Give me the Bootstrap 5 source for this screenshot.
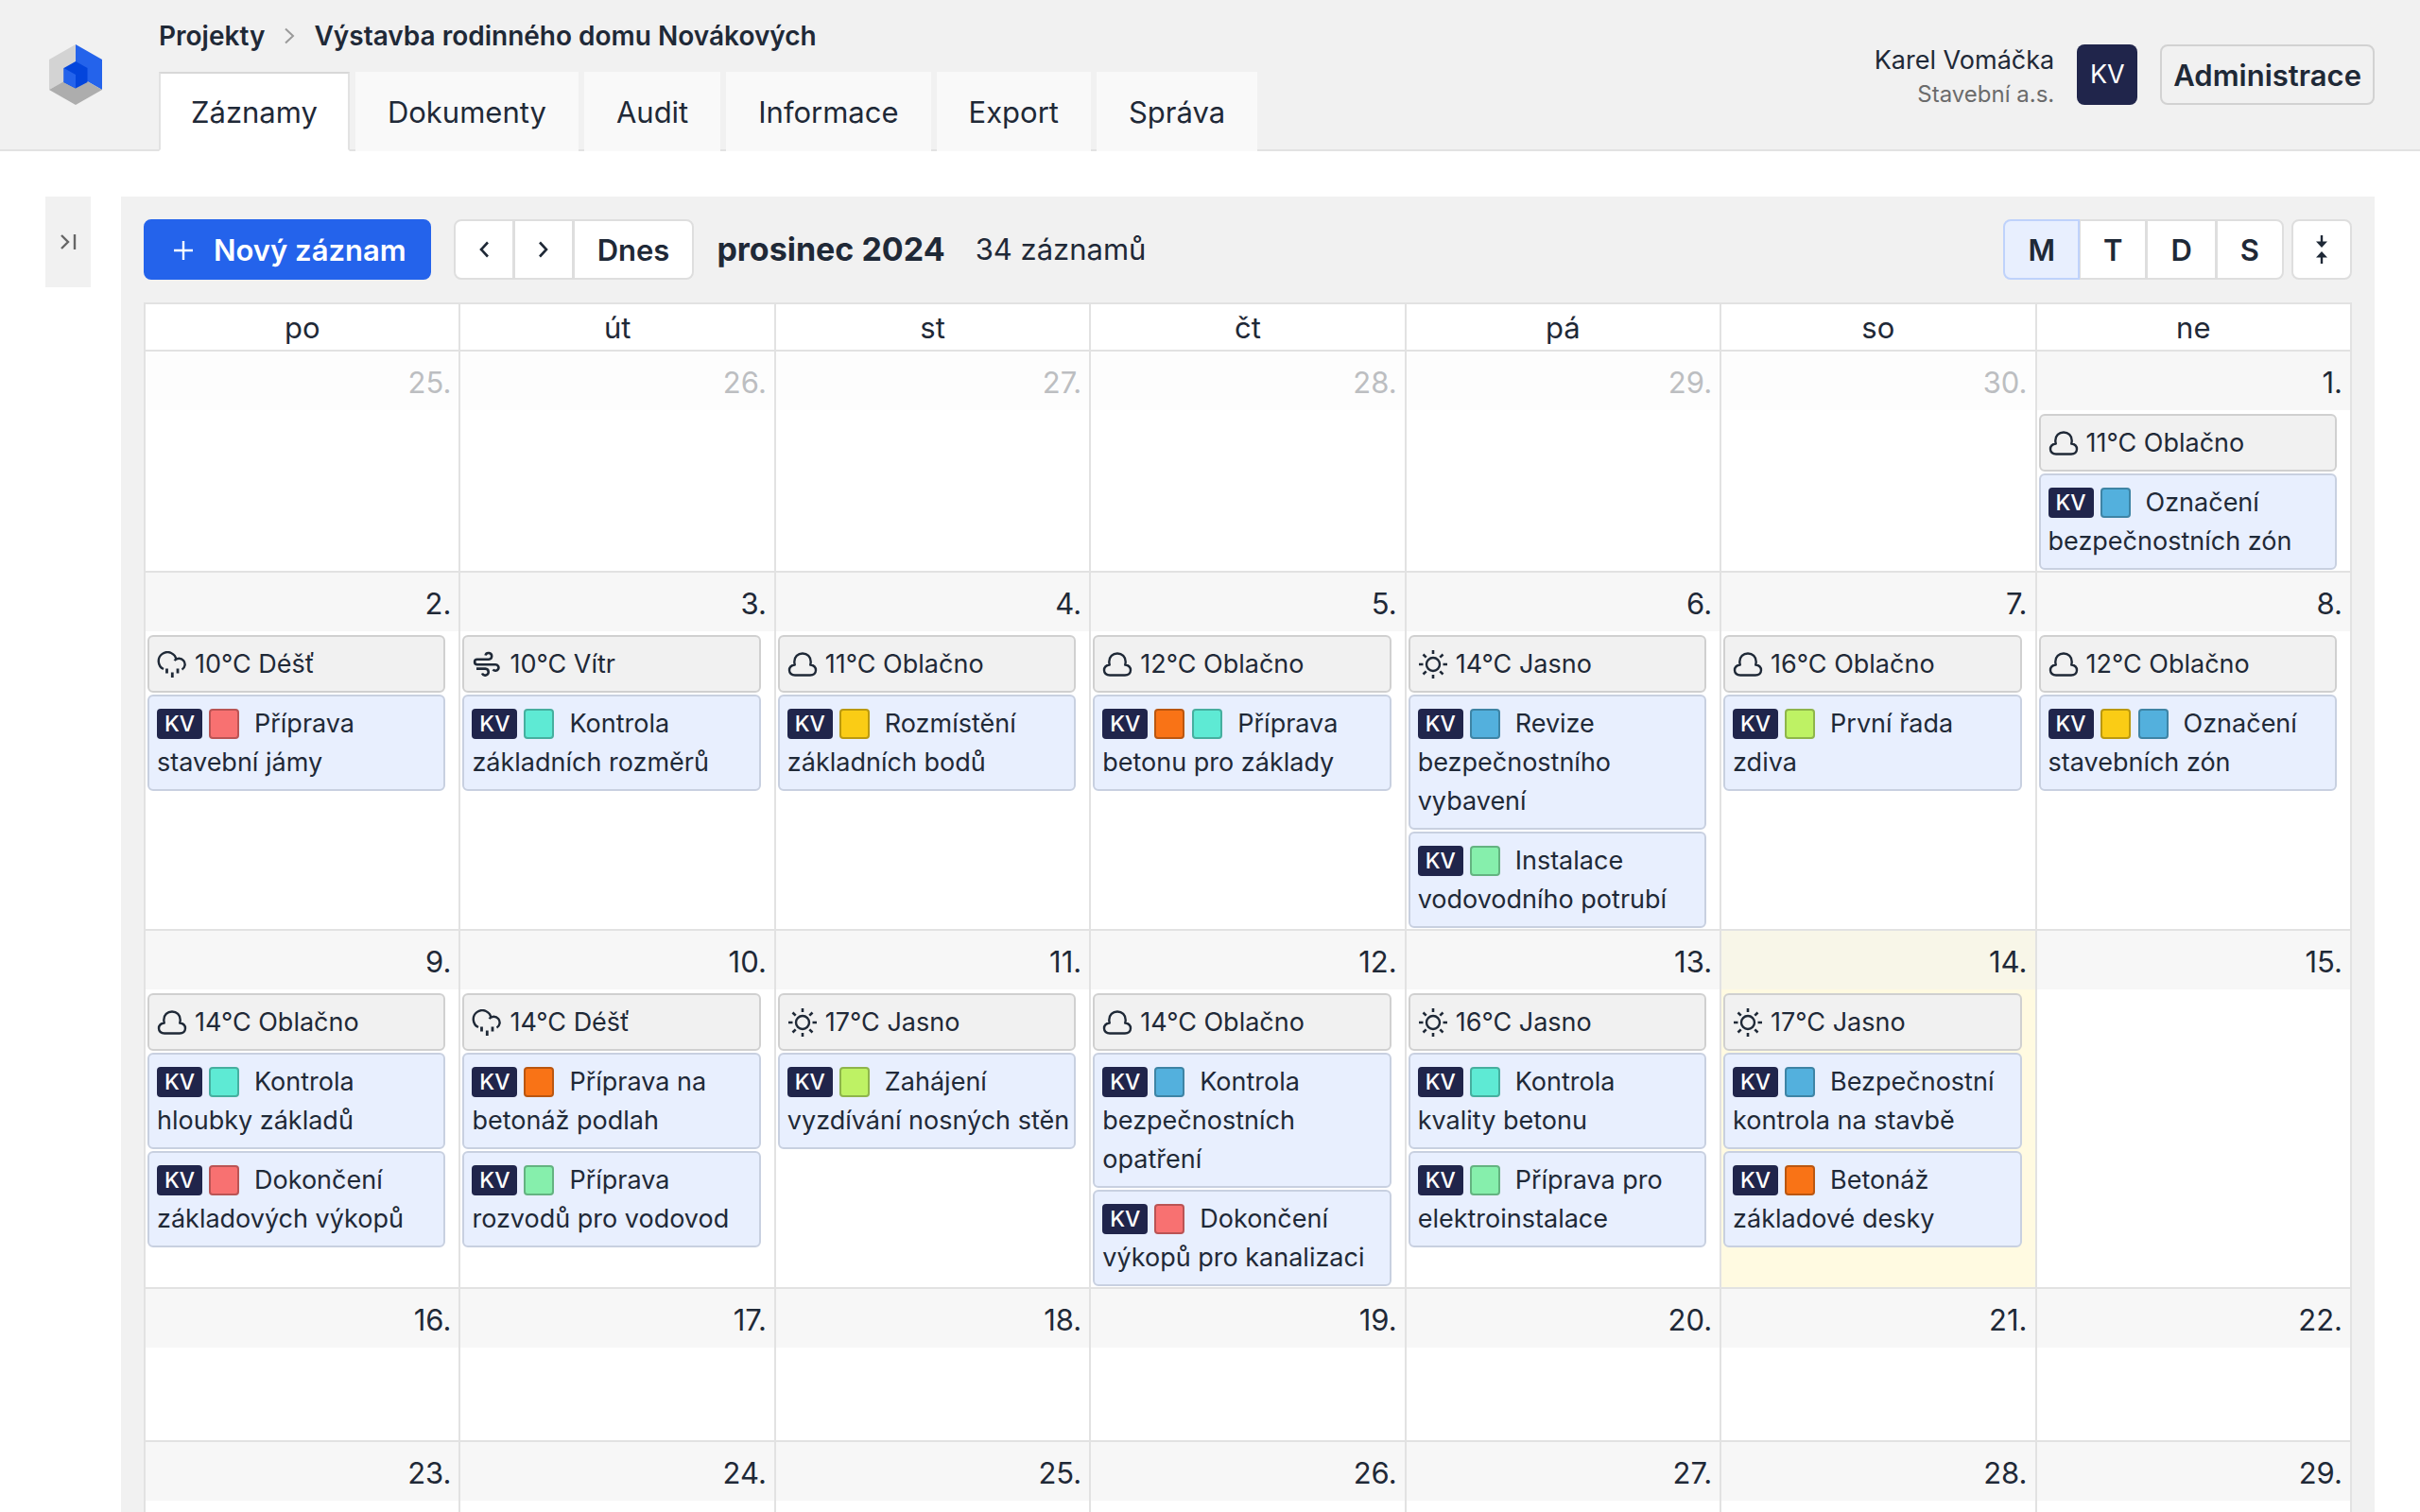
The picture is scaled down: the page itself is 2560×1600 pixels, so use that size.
<!DOCTYPE html>
<html lang="cs">
<head>
<meta charset="utf-8">
<meta name="viewport" content="width=device-width, initial-scale=1">
<title>Výstavba rodinného domu Novákových – Záznamy</title>
<link href="https://cdn.jsdelivr.net/npm/bootstrap@5.3.0/dist/css/bootstrap.min.css" rel="stylesheet">
<style>
  :root { --ink: #1f2937; --line: #e2e2e2; --panel: #f1f1f1; --navy: #20254b; --blue: #2463eb; }
  body { font-family: Inter, "Liberation Sans", sans-serif; font-size: 31px; line-height: 48px; color: var(--ink); background: #fff; overflow-x: hidden; }
  a { color: inherit; text-decoration: none; }
  svg { display: block; flex: none; }

  .topbar { background: var(--panel); padding: 0 48px; height: 160px; border-bottom: 2px solid var(--line); }
  .brandmark { margin-right: 60px; }
  .crumbs { --bs-breadcrumb-margin-bottom: 0; font-size: 28px; font-weight: 600; line-height: 40px; padding-top: 18px; gap: 20px; }
  .maintabs { gap: 6px; margin-bottom: -2px; border: 0; }
  .maintabs .nav-link { border: 2px solid transparent; border-radius: 0; padding: 17px 32px 15px; line-height: 48px; margin: 0; background: #f9f9f9; color: var(--ink); }
  .maintabs .nav-link.active { background: #fff; border-color: #d8d8d8 var(--line) #fff; color: var(--ink); }
  .userbox { padding-top: 6px; }
  .username { font-size: 27px; line-height: 36px; }
  .company { font-size: 24px; line-height: 36px; color: #6b6b6b; }
  .avatar { width: 64px; height: 64px; border-radius: 8px; background: var(--navy); color: #fff; font-size: 27px; }
  .tool { --bs-btn-font-size: 31px; --bs-btn-line-height: 48px; --bs-btn-font-weight: 600; --bs-btn-color: var(--ink); --bs-btn-bg: #fff; --bs-btn-border-color: #dedede; --bs-btn-border-width: 2px; --bs-btn-border-radius: 8px; --bs-btn-padding-x: 24px; --bs-btn-active-bg: #e8effe; --bs-btn-active-color: var(--ink); --bs-btn-active-border-color: #bfd2fb; --bs-btn-hover-bg: #f5f5f5; --bs-btn-hover-color: var(--ink); --bs-btn-hover-border-color: #dedede; padding-top: 7px; padding-bottom: 5px; }
  .tool-admin { --bs-btn-bg: transparent; --bs-btn-border-color: #d2d2d2; --bs-btn-padding-x: 12px; }
  .tool-new { --bs-btn-bg: var(--blue); --bs-btn-border-color: var(--blue); --bs-btn-color: #fff; gap: 20px; padding-left: 28px; }
  .tool-icon { width: 64px; padding: 6px 0; display: inline-flex; align-items: center; justify-content: center; }
  .btn-group > .tool:not(:first-child) { margin-left: -2px; }

  .workspace { padding: 48px 48px 0; gap: 32px; }
  .expander { width: 48px; height: 96px; border: 0; border-radius: 0; background: var(--panel); color: #666; }
  .board { background: var(--panel); padding: 24px; min-width: 0; }
  .board-title { font-size: 34px; font-weight: 700; line-height: 48px; margin: 0; }

  .calendar { table-layout: fixed; width: 100%; border-collapse: collapse; background: #fff; }
  .calendar th, .calendar td { border: 2px solid var(--line); padding: 0; vertical-align: top; }
  .calendar th { font-weight: 400; text-align: center; line-height: 46px; padding-top: 2px; }
  .calendar td { height: 162px; }
  .daynum { height: 62px; padding: 8px 8px 0; text-align: right; line-height: 50px; background: #f7f7f7; }
  .outside .daynum { background: #fdfdfd; color: #bcbec1; }
  .today { background: #fffae1; }
  .today .daynum { background: #f8f6e8; }
  .entries { gap: 2px; padding: 4px 14px 1px 2px; font-size: 27px; line-height: 41px; }
  .sky, .entry { border: 2px solid #d0d0d0; border-radius: 6px; padding: 8px 2px 8px 8px; }
  .sky { display: flex; align-items: center; gap: 8px; background: var(--panel); }
  .entry { display: block; background: #e8effe; border-color: #c8d0e0; }
  .who { display: inline-block; vertical-align: middle; width: 48px; height: 32px; border-radius: 4px; background: var(--navy); color: #fff; font-size: 23px; font-weight: 500; line-height: 32px; text-align: center; margin-right: 7px; margin-top: -4px; }
  .tagbox { display: inline-block; vertical-align: middle; width: 32px; height: 32px; border-radius: 4px; border: 2px solid rgba(0, 0, 0, .25); margin-right: 8px; margin-top: -4px; }
  .tagbox:last-of-type { margin-right: 16px; }
  .red { background-color: #f87171; } .teal { background-color: #5eead4; } .yellow { background-color: #facc15; }
  .orange { background-color: #f97316; } .sea { background-color: #53b0dd; } .green { background-color: #86efac; } .lime { background-color: #bef264; }
</style>
</head>
<body>
<svg class="d-none" aria-hidden="true">
  <symbol id="cloud" viewBox="0 0 32 28"><path d="M8 25.500C4.300 25.500 2 23.200 2 20.300C2 17.300 4.200 15 7.800 14.500C7.500 13.500 7.300 12.500 7.300 11.200C7.300 6 11 2.500 16 2.500S24.700 6 24.700 11.200C24.700 12.500 24.500 13.500 24.200 14.500C27.800 15 30 17.300 30 20.300C30 23.200 27.700 25.500 24 25.500Z" fill="none" stroke="currentColor" stroke-width="2.400" stroke-linejoin="round"/></symbol>
  <symbol id="rain" viewBox="0 0 32 28"><path d="M7 19A9.400 9.400 0 1 1 20.500 9.500M18.500 10A6.300 6.300 0 1 1 26.500 19.500" fill="none" stroke="currentColor" stroke-width="2.400"/><path d="M10.500 18.500v5M16.300 22.500v5.500M22 18.500v5" fill="none" stroke="currentColor" stroke-width="2.800"/></symbol>
  <symbol id="wind" viewBox="0 0 32 28"><path d="M14.500 4.500A3.400 3.400 0 1 1 18 8.800H5.800A2.700 2.700 0 0 0 5.800 14.200H25A3.300 3.300 0 1 1 22.500 19.500M5 18.600H14.500A3.500 3.500 0 1 1 11 23.500" fill="none" stroke="currentColor" stroke-width="2.600"/></symbol>
  <symbol id="sun" viewBox="0 0 32 30"><circle cx="16" cy="15" r="7" fill="none" stroke="currentColor" stroke-width="2.400"/><path d="M16 0v4M16 26v4M1 15h4.500M26.500 15H31M5.500 4.500l3.200 3.200M23.300 22.300l3.200 3.200M5.500 25.500l3.200-3.200M23.300 7.700l3.200-3.200" stroke="currentColor" stroke-width="2.600"/></symbol>
</svg>

<header class="topbar d-flex align-items-center">
  <a href="#" class="brandmark ms-1" aria-label="Domů">
    <svg width="56" height="64" viewBox="0 0 56 64"><path d="M28 0v32L0 48V16z" fill="#d3d3d3"/><path d="M28 0l28 16v32L28 32z" fill="#2463eb"/><path d="M0 48l28-16 28 16-28 16z" fill="#adadad"/><path d="M28 18l12.500 7v15L28 46.500 15.500 40V25z" fill="#0345dc"/><path d="M15.500 25L28 32v14.500L15.500 40z" fill="#2463eb"/></svg>
  </a>
  <div class="d-flex flex-column justify-content-between align-self-stretch">
    <nav aria-label="Drobečková navigace">
      <ol class="breadcrumb crumbs align-items-center">
        <li><a href="#">Projekty</a></li>
        <li aria-hidden="true"><svg width="12" height="18" viewBox="0 0 12 18"><path d="M2 1.500l8 7.500-8 7.500" fill="none" stroke="#9a9a9a" stroke-width="2"/></svg></li>
        <li aria-current="page">Výstavba rodinného domu Novákových</li>
      </ol>
    </nav>
    <ul class="nav nav-tabs maintabs">
      <li class="nav-item"><a class="nav-link active" aria-current="page" href="#">Záznamy</a></li>
      <li class="nav-item"><a class="nav-link" href="#">Dokumenty</a></li>
      <li class="nav-item"><a class="nav-link" href="#">Audit</a></li>
      <li class="nav-item"><a class="nav-link" href="#">Informace</a></li>
      <li class="nav-item"><a class="nav-link" href="#">Export</a></li>
      <li class="nav-item"><a class="nav-link" href="#">Správa</a></li>
    </ul>
  </div>
  <div class="d-flex align-items-center gap-4 ms-auto">
    <div class="userbox text-end"><div class="username">Karel Vomáčka</div><div class="company">Stavební a.s.</div></div>
    <div class="avatar d-flex align-items-center justify-content-center">KV</div>
    <button type="button" class="btn tool tool-admin">Administrace</button>
  </div>
</header>

<main class="workspace d-flex align-items-start">
  <button type="button" class="expander btn p-0 flex-shrink-0 d-flex align-items-center justify-content-center" aria-label="Rozbalit panel">
    <svg width="18" height="18" viewBox="0 0 18 18"><path d="M2 2l7 7-7 7M16 1v16" fill="none" stroke="currentColor" stroke-width="2.400"/></svg>
  </button>
  <section class="board flex-grow-1">
    <div class="d-flex align-items-center mb-4">
      <button type="button" class="btn tool tool-new d-flex align-items-center me-4">
        <svg width="24" height="24" viewBox="0 0 24 24"><path d="M12 2v20M2 12h20" stroke="currentColor" stroke-width="2.400"/></svg>Nový záznam
      </button>
      <div class="btn-group me-4" role="group" aria-label="Posun období">
        <button type="button" class="btn tool tool-icon" aria-label="Předchozí"><svg width="12" height="18" viewBox="0 0 12 18"><path d="M10 1.500L3 9l7 7.500" fill="none" stroke="currentColor" stroke-width="2.600"/></svg></button>
        <button type="button" class="btn tool tool-icon" aria-label="Další"><svg width="12" height="18" viewBox="0 0 12 18"><path d="M2 1.500L9 9l-7 7.500" fill="none" stroke="currentColor" stroke-width="2.600"/></svg></button>
        <button type="button" class="btn tool">Dnes</button>
      </div>
      <h1 class="board-title">prosinec 2024</h1>
      <span class="ms-4 ps-2">34 záznamů</span>
      <div class="d-flex gap-2 ms-auto">
        <div class="btn-group" role="group" aria-label="Zobrazení">
          <button type="button" class="btn tool active">M</button>
          <button type="button" class="btn tool">T</button>
          <button type="button" class="btn tool">D</button>
          <button type="button" class="btn tool">S</button>
        </div>
        <button type="button" class="btn tool tool-icon" aria-label="Sbalit řádky"><svg width="14" height="30" viewBox="0 0 14 30"><path d="M7 0v8M7 30v-8" stroke="currentColor" stroke-width="2.400"/><path d="M1 6.500h12L7 13zM1 23.500h12L7 17z" fill="currentColor"/></svg></button>
      </div>
    </div>

    <table class="calendar">
      <thead><tr><th scope="col">po</th><th scope="col">út</th><th scope="col">st</th><th scope="col">čt</th><th scope="col">pá</th><th scope="col">so</th><th scope="col">ne</th></tr></thead>
      <tbody id="weeks"></tbody>
    </table>
  </section>
</main>

<script src="https://cdn.jsdelivr.net/npm/bootstrap@5.3.0/dist/js/bootstrap.bundle.min.js"></script>
<script>
  // Weather: [temperature, kind]; records: [tag colours, title]
  const sky = { cloud: 'Oblačno', rain: 'Déšť', wind: 'Vítr', sun: 'Jasno' };
  const days = {
    1: [[11, 'cloud'], ['sea', 'Označení bezpečnostních zón']],
    2: [[10, 'rain'], ['red', 'Příprava stavební jámy']],
    3: [[10, 'wind'], ['teal', 'Kontrola základních rozměrů']],
    4: [[11, 'cloud'], ['yellow', 'Rozmístění základních bodů']],
    5: [[12, 'cloud'], ['orange teal', 'Příprava betonu pro základy']],
    6: [[14, 'sun'], ['sea', 'Revize bezpečnostního vybavení'], ['green', 'Instalace vodovodního potrubí']],
    7: [[16, 'cloud'], ['lime', 'První řada zdiva']],
    8: [[12, 'cloud'], ['yellow sea', 'Označení stavebních zón']],
    9: [[14, 'cloud'], ['teal', 'Kontrola hloubky základů'], ['red', 'Dokončení základových výkopů']],
    10: [[14, 'rain'], ['orange', 'Příprava na betonáž podlah'], ['green', 'Příprava rozvodů pro vodovod']],
    11: [[17, 'sun'], ['lime', 'Zahájení vyzdívání nosných stěn']],
    12: [[14, 'cloud'], ['sea', 'Kontrola bezpečnostních opatření'], ['red', 'Dokončení výkopů pro kanalizaci']],
    13: [[16, 'sun'], ['teal', 'Kontrola kvality&nbsp;betonu'], ['green', 'Příprava pro elektroinstalace']],
    14: [[17, 'sun'], ['sea', 'Bezpečnostní kontrola na stavbě'], ['orange', 'Betonáž základové desky']]
  };
  const icon = k => `<svg width="32" height="${k === 'sun' ? 30 : 28}"><use href="#${k}"/></svg>`;
  const entry = ([tags, title]) => `<a href="#" class="entry"><span class="who">KV</span>${tags.split(' ').map(t => `<span class="tagbox ${t}"></span>`).join('')}${title}</a>`;
  const cell = n => {
    const outside = n < 1, data = days[n];
    const body = data ? `<div class="entries d-flex flex-column"><div class="sky">${icon(data[0][1])}<span>${data[0][0]}°C ${sky[data[0][1]]}</span></div>${data.slice(1).map(entry).join('')}</div>` : '';
    return `<td class="${outside ? 'outside' : n === 14 ? 'today' : ''}"><div class="daynum">${outside ? n + 30 : n}.</div>${body}</td>`;
  };
  let html = '';
  for (let start = -5; start < 29; start += 7) {
    html += '<tr>' + Array.from({ length: 7 }, (_, i) => cell(start + i)).join('') + '</tr>';
  }
  document.getElementById('weeks').innerHTML = html;
</script>
</body>
</html>
